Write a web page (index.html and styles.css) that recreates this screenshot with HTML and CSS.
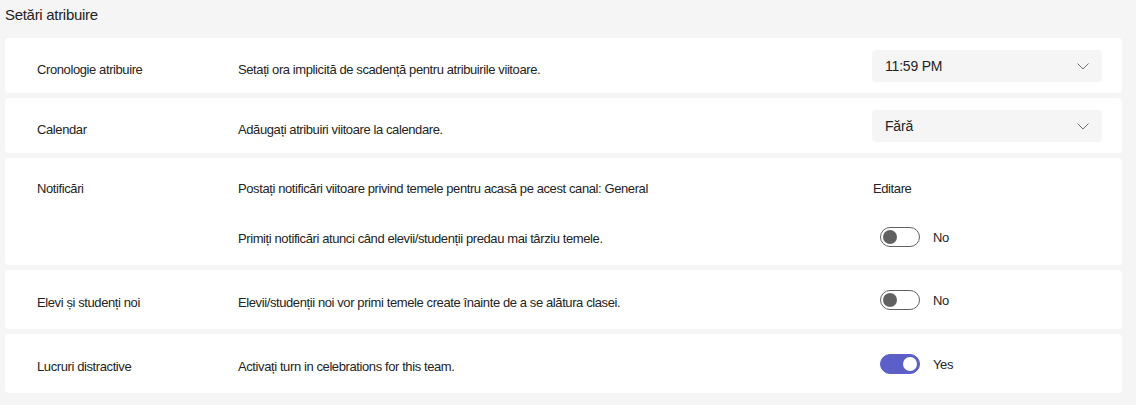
FILE: index.html
```html
<!DOCTYPE html>
<html lang="ro">
<head>
  <meta charset="UTF-8">
  <meta name="viewport" content="width=device-width, initial-scale=1.0">
  <title>Setări atribuire</title>
  <link rel="stylesheet" href="styles.css">
</head>
<body>
  <div class="settings">
    <h1 class="settings-title">Setări atribuire</h1>

    <!-- Cronologie -->
    <div class="setting setting-select">
      <div class="setting-label">Cronologie atribuire</div>
      <div class="setting-desc">Setați ora implicită de scadență pentru atribuirile viitoare.</div>
      <div class="dropdown">
        <span>11:59 PM</span>
        <svg class="chevron" width="12" height="7" viewBox="0 0 12 7"><path d="M0.5 0.5 L6 6 L11.5 0.5" fill="none" stroke="#707070" stroke-width="1"/></svg>
      </div>
    </div>

    <!-- Calendar -->
    <div class="setting setting-select">
      <div class="setting-label">Calendar</div>
      <div class="setting-desc">Adăugați atribuiri viitoare la calendare.</div>
      <div class="dropdown">
        <span>Fără</span>
        <svg class="chevron" width="12" height="7" viewBox="0 0 12 7"><path d="M0.5 0.5 L6 6 L11.5 0.5" fill="none" stroke="#707070" stroke-width="1"/></svg>
      </div>
    </div>

    <!-- Notificari -->
    <div class="setting setting-multi">
      <div class="setting-label">Notificări</div>
      <div class="setting-desc">Postați notificări viitoare privind temele pentru acasă pe acest canal: General</div>
      <div class="setting-link">Editare</div>

      <div class="setting-desc row-toggle">Primiți notificări atunci când elevii/studenții predau mai târziu temele.</div>
      <div class="switch-wrap">
        <span class="switch"></span>
        <span class="switch-text">No</span>
      </div>
    </div>

    <!-- Elevi noi -->
    <div class="setting setting-toggle">
      <div class="setting-label">Elevi și studenți noi</div>
      <div class="setting-desc">Elevii/studenții noi vor primi temele create înainte de a se alătura clasei.</div>
      <div class="switch-wrap">
        <span class="switch"></span>
        <span class="switch-text">No</span>
      </div>
    </div>

    <!-- Lucruri distractive -->
    <div class="setting setting-toggle">
      <div class="setting-label">Lucruri distractive</div>
      <div class="setting-desc">Activați turn in celebrations for this team.</div>
      <div class="switch-wrap">
        <span class="switch on"></span>
        <span class="switch-text">Yes</span>
      </div>
    </div>
  </div>
</body>
</html>
```

FILE: styles.css
```css
body {
  margin: 0;
  background-color: #f5f5f5;
  color: #242424;
  font-family: 'Liberation Sans', Arial, sans-serif;
}

.settings {
  width: 1117px;
  margin-left: 5px;
  display: flex;
  flex-direction: column;
  gap: 5px;
}

.settings-title {
  margin: 0 0 8px 0;
  padding-top: 5px;
  font-size: 15px;
  font-weight: normal;
  line-height: 20px;
  letter-spacing: -0.3px;
}

.setting {
  display: grid;
  grid-template-columns: 201px 1fr 230px;
  align-items: center;
  padding: 0 20px 0 32px;
  background-color: #ffffff;
  border-radius: 4px;
  font-size: 13px;
  letter-spacing: -0.4px;
  line-height: 18px;
}

.setting-label,
.setting-desc,
.setting-link {
  white-space: nowrap;
}

/* rows with a dropdown */
.setting-select {
  padding-top: 12px;
  padding-bottom: 11px;
}

.setting-select .setting-label,
.setting-select .setting-desc {
  padding-top: 7px;
}

/* rows with a single toggle */
.setting-toggle {
  padding-top: 18px;
  padding-bottom: 17px;
  grid-template-rows: 24px;
}

.setting-toggle .setting-label,
.setting-toggle .setting-desc {
  padding-top: 6px;
}

/* notifications: two lines */
.setting-multi {
  padding-top: 22px;
  padding-bottom: 16px;
  grid-template-rows: 18px 24px;
  row-gap: 27px;
}

.setting-multi .setting-label {
  grid-row: 1;
  align-self: start;
}

.setting-multi .row-toggle {
  grid-column: 2;
  padding-top: 4px;
}

.dropdown {
  height: 32px;
  display: flex;
  align-items: center;
  justify-content: space-between;
  padding: 0 13px;
  background-color: #f5f5f5;
  border-radius: 4px;
  font-size: 14px;
  letter-spacing: -0.2px;
}

.chevron {
  display: block;
}

.setting-link {
  padding-left: 1px;
}

.switch-wrap {
  display: flex;
  align-items: center;
}

.switch {
  position: relative;
  width: 40px;
  height: 20px;
  margin-left: 8px;
  box-sizing: border-box;
  border: 1px solid #616161;
  border-radius: 10px;
  background-color: #ffffff;
}

.switch::after {
  content: '';
  position: absolute;
  top: 2px;
  left: 2px;
  width: 14px;
  height: 14px;
  border-radius: 50%;
  background-color: #616161;
}

.switch.on {
  background-color: #5b5fc7;
  border-color: #5b5fc7;
}

.switch.on::after {
  left: auto;
  right: 2px;
  background-color: #ffffff;
}

.switch-text {
  margin-left: 13px;
  padding-top: 2px;
}
```
